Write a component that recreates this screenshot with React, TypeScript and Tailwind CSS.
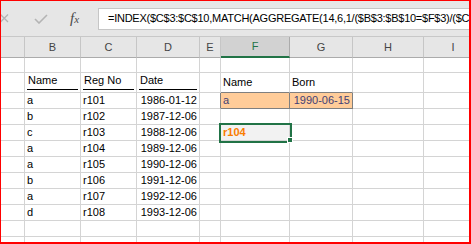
import React from "react";

const COLS = ["A", "B", "C", "D", "E", "F", "G", "H", "I"];
const WIDTHS = ["w-[24px]", "w-[56px]", "w-[56px]", "w-[63px]", "w-[21px]", "w-[69px]", "w-[63px]", "w-[71px]", "w-[59px]"];

const DATA = [
  ["a", "r101", "1986-01-12"],
  ["b", "r102", "1987-12-06"],
  ["c", "r103", "1988-12-06"],
  ["a", "r104", "1989-12-06"],
  ["a", "r105", "1990-12-06"],
  ["b", "r106", "1991-12-06"],
  ["a", "r107", "1992-12-06"],
  ["d", "r108", "1993-12-06"],
];

const FONT = { fontFamily: '"Liberation Sans", Arial, sans-serif' };

function Cell({
  w,
  h,
  children,
  className = "",
}: {
  w: string;
  h: string;
  children?: React.ReactNode;
  className?: string;
}) {
  return (
    <div
      className={`${w} ${h} shrink-0 border-r border-b border-[#d4d4d4] flex items-end px-[2px] pb-[1px] whitespace-nowrap ${className}`}
    >
      {children}
    </div>
  );
}

function Row({ h, cells }: { h: string; cells: (i: number) => { node?: React.ReactNode; cls?: string } }) {
  return (
    <div className="flex">
      {COLS.map((c, i) => {
        const { node, cls } = cells(i);
        return (
          <Cell key={c} w={WIDTHS[i]} h={h} className={cls}>
            {node}
          </Cell>
        );
      })}
    </div>
  );
}

export default function App() {
  return (
    <div
      className="w-[471px] h-[244px] overflow-hidden bg-white border-l border-t border-r-2 border-b-2 border-[#ff0000] text-[11px] text-black"
      style={FONT}
    >
      {/* formula bar */}
      <div className="h-[36px] bg-[#e6e6e6] border-b border-[#c8c8c8] flex items-center">
        <div className="w-[97px] h-full flex items-center shrink-0">
          <svg width="9" height="9" viewBox="0 0 9 9" className="-translate-x-[1px]">
            <path d="M0.5 0.5 L8 8 M8 0.5 L0.5 8" stroke="#b4b4b4" strokeWidth="1.3" />
          </svg>
          <svg width="14" height="10" viewBox="0 0 14 10" className="ml-[24px]">
            <path d="M1 5 L5 9 L13 1" stroke="#b4b4b4" strokeWidth="1.6" fill="none" />
          </svg>
          <span
            className="ml-[22px] text-[15px] italic text-[#4a4a4a]"
            style={{ fontFamily: '"Liberation Serif", "Times New Roman", serif' }}
          >
            f<span className="text-[11px]">x</span>
          </span>
        </div>
        <div className="flex-1 h-[22px] bg-white border border-[#c6c6c6] border-r-0 flex items-center pl-[9px] overflow-hidden whitespace-nowrap">
          <span className="text-[11px] tracking-[-0.25px] text-black">
            =INDEX($C$3:$C$10,MATCH(AGGREGATE(14,6,1/($B$3:$B$10=$F$3)/($C$3:$C$10&lt;&gt;""),1),$C$3:$C$10,0))
          </span>
        </div>
      </div>

      {/* column headers */}
      <div className="flex">
        {COLS.map((c, i) => (
          <div
            key={c}
            className={`${WIDTHS[i]} h-[21px] shrink-0 flex items-center justify-center text-[11px] border-r ${
              c === "F"
                ? "bg-[#d2d2d2] text-[#217346] border-b-2 border-b-[#217346] border-r-[#ababab]"
                : "bg-[#e6e6e6] text-[#444] border-b border-b-[#ababab] border-r-[#c6c6c6]"
            }`}
          >
            {c === "A" ? "" : c}
          </div>
        ))}
      </div>

      {/* row 1 */}
      <Row h="h-[15px]" cells={() => ({})} />

      {/* row 2 */}
      <Row
        h="h-[20px]"
        cells={(i) => {
          const head = ["", "Name", "Reg No", "Date"][i];
          if (i >= 1 && i <= 3)
            return {
              node: <span className="w-full border-b border-black leading-[13px] pb-[2px] mb-[1px] px-[1px]">{head}</span>,
            };
          if (i === 5) return { node: <span className="leading-[14px] pb-[2px]">Name</span>, cls: "border-b-[#7f7f7f]" };
          if (i === 6) return { node: <span className="leading-[14px] pb-[2px]">Born</span>, cls: "border-b-[#7f7f7f]" };
          return {};
        }}
      />

      {DATA.map((r, ri) => (
        <Row
          key={ri}
          h="h-[16px]"
          cells={(i) => {
            if (i === 1) return { node: <span className="leading-[14px]">{r[0]}</span> };
            if (i === 2) return { node: <span className="leading-[14px]">{r[1]}</span> };
            if (i === 3) return { node: <span className="leading-[14px]">{r[2]}</span>, cls: "justify-end" };
            if (ri === 0 && i === 4) return { cls: "border-r-[#7f7f7f]" };
            if (ri === 0 && i === 5)
              return {
                node: <span className="leading-[14px] text-[#3f3f76]">a</span>,
                cls: "bg-[#ffcc99] border-r-[#7f7f7f] border-b-[#7f7f7f]",
              };
            if (ri === 0 && i === 6)
              return {
                node: <span className="leading-[14px] text-[#3f3f76]">1990-06-15</span>,
                cls: "bg-[#ffcc99] border-r-[#7f7f7f] border-b-[#7f7f7f] justify-end",
              };
            if (ri === 2 && i === 5)
              return {
                node: (
                  <div className="relative w-full h-full flex items-end">
                    <span className="leading-[14px] font-bold text-[#fa7d00]">r104</span>
                    <div className="absolute -left-[4px] -top-[2px] w-[73px] h-[20px] border-2 border-[#217346]" />
                    <div className="absolute left-[64px] top-[12px] w-[6px] h-[6px] bg-[#217346] border border-white" />
                  </div>
                ),
                cls: "bg-[#f2f2f2]",
              };
            return {};
          }}
        />
      ))}

      <Row h="h-[16px]" cells={() => ({})} />
      <Row h="h-[16px]" cells={() => ({})} />
    </div>
  );
}
